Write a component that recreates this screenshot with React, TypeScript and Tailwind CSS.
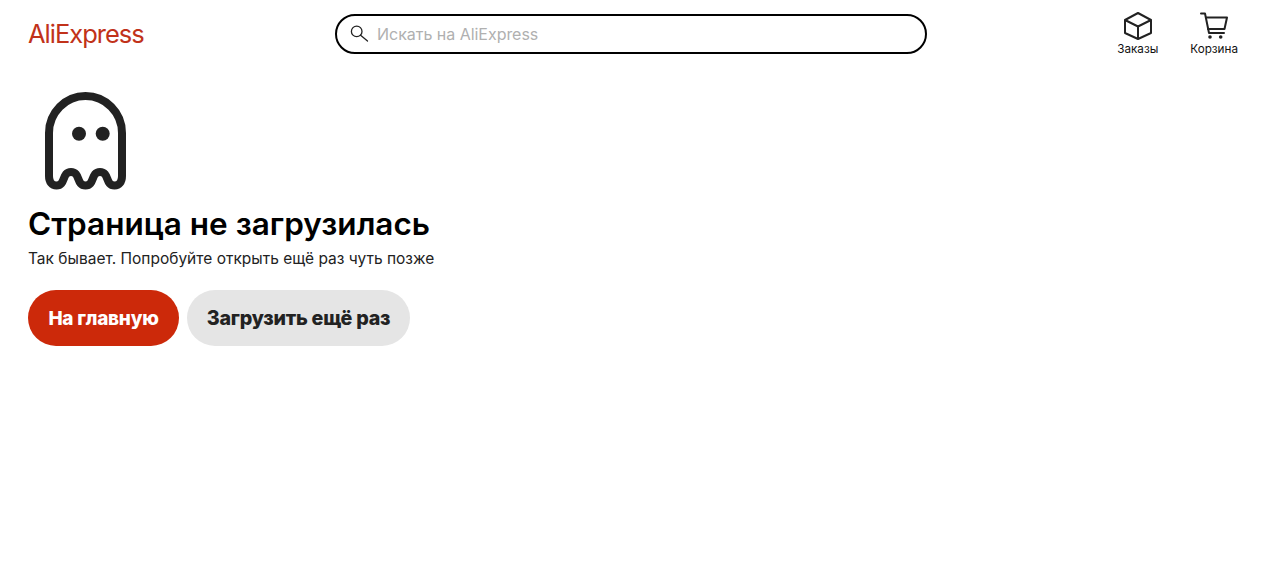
export default function App() {
  return (
    <div className="min-h-[563px] bg-white font-['Inter',sans-serif] text-[#111]">
      <header className="flex h-[68px] items-center justify-between pl-[28px] pr-[30px]">
        <div className="w-[307px] text-[25.5px] font-normal leading-none tracking-[-1px] text-[#c1321a]">AliExpress</div>
        <div className="flex h-[40px] w-[592px] items-center rounded-[20px] border-2 border-black pl-[13px]">
          <svg width="20" height="20" viewBox="0 0 20 20" fill="none" stroke="#222" strokeWidth="1.300">
            <circle cx="6.700" cy="7.400" r="5.300" />
            <path d="M10.600 11.200 L17.500 17" strokeLinecap="round" />
          </svg>
          <span className="ml-[7px] text-[16px] tracking-[-0.03px] text-[#b0b0b0]">Искать на AliExpress</span>
        </div>
        <nav className="ml-auto flex gap-[32px]">
          <div className="flex flex-col items-center">
            <svg width="30" height="28" viewBox="0 0 30 28" fill="none" stroke="#222" strokeWidth="2" strokeLinejoin="round">
              <path d="M15 1 L28 8 V21 L15 27 L2 21 V8 Z" />
              <path d="M2 8 L15 14.500 L28 8 M15 14.500 V27" />
            </svg>
            <span className="mt-[2px] text-[11.7px] leading-[14px]">Заказы</span>
          </div>
          <div className="flex flex-col items-center">
            <svg width="30" height="28" viewBox="0 0 30 28" fill="none" stroke="#222" strokeWidth="2" strokeLinejoin="round" strokeLinecap="round">
              <path d="M2 1.500 H6 L10 21 H25" />
              <path d="M7 5.500 H28 L25.500 17 H9" />
              <circle cx="11" cy="25" r="1.800" fill="#222" stroke="none" />
              <circle cx="21.700" cy="25" r="1.800" fill="#222" stroke="none" />
            </svg>
            <span className="mt-[2px] text-[11.7px] leading-[14px]">Корзина</span>
          </div>
        </nav>
      </header>
      <main className="pl-[28px] pt-[20px]">
        <svg width="116" height="104" viewBox="0 0 116 104" fill="none" stroke="#222" strokeWidth="8" strokeLinejoin="round">
          <path d="M21 45 A36.500 37 0 0 1 94 45 V88 C94 94 91 97.500 86.500 97.500 C77 97.500 81.500 84 72 84 C62.500 84 67 97.500 57.500 97.500 C48 97.500 52.500 84 43 84 C33.500 84 38 97.500 28.500 97.500 C24 97.500 21 94 21 88 Z" />
          <circle cx="51" cy="45.700" r="7" fill="#222" stroke="none" />
          <circle cx="74.700" cy="45.700" r="7" fill="#222" stroke="none" />
        </svg>
        <h1 className="mt-[14px] text-[31.5px] font-semibold leading-[36px] text-black">Страница не загрузилась</h1>
        <p className="mt-[7px] text-[15.5px] leading-[20px] text-[#222]">Так бывает. Попробуйте открыть ещё раз чуть позже</p>
        <div className="mt-[21px] flex gap-[8px]">
          <button className="h-[56px] w-[151px] rounded-[28px] bg-[#cc290a] pt-[2px] text-[19px] font-extrabold tracking-[-0.25px] text-white">На главную</button>
          <button className="h-[56px] w-[223px] rounded-[28px] bg-[#e5e5e5] pt-[2px] text-[19.7px] font-extrabold tracking-[-0.25px] text-[#222]">Загрузить ещё раз</button>
        </div>
      </main>
    </div>
  );
}
